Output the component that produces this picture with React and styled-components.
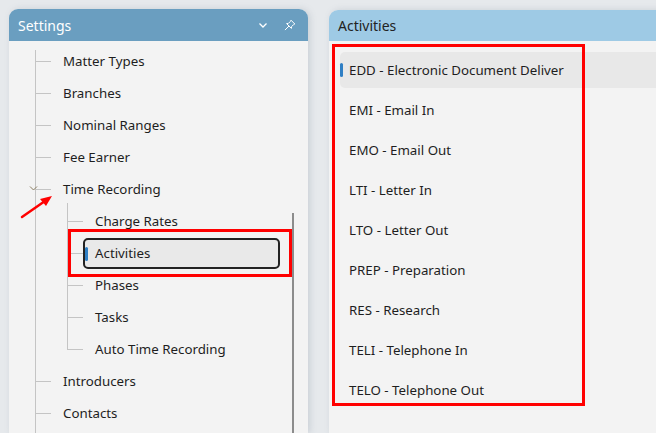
import React from 'react';
import styled, { createGlobalStyle } from 'styled-components';

const GlobalStyle = createGlobalStyle`
  html, body {
    margin: 0;
    padding: 0;
    height: 100%;
    overflow: hidden;
    background: #e6e9ec;
    font-family: "Noto Sans", "Open Sans", sans-serif;
  }
  #root {
    height: 100%;
  }
`;

const Page = styled.div`
  position: relative;
  height: 100%;
  display: flex;
  align-items: stretch;
  padding: 9px 0 0 9px;
  box-sizing: border-box;
  gap: 21px;
`;

const Panel = styled.section`
  position: relative;
  display: flex;
  flex-direction: column;
  width: ${({ width }) => width};
  flex-shrink: 0;
  margin-top: ${({ offset }) => offset || 0}px;
  background: #f3f3f3;
  border-radius: 9px 9px 0 0;
  box-shadow: 2px 0 6px rgba(120, 135, 150, 0.25);
  overflow: hidden;
`;

const Header = styled.header`
  display: flex;
  align-items: center;
  height: ${({ h }) => h}px;
  padding: 0 12px 0 9px;
  background: ${({ bg }) => bg};
  color: ${({ fg }) => fg};
  font-size: 14px;
  flex-shrink: 0;
`;

const HeaderTitle = styled.span`
  flex: 1;
`;

const HeaderIcons = styled.div`
  display: flex;
  align-items: center;
  gap: 16px;
`;

const TreeBody = styled.div`
  position: relative;
  flex: 1;
  padding-top: 4px;
`;

const Tree = styled.ul`
  position: relative;
  list-style: none;
  margin: 0;
  padding: 0;

  &::before {
    content: '';
    position: absolute;
    left: ${({ lineLeft }) => lineLeft}px;
    top: ${({ lineTop }) => lineTop}px;
    bottom: ${({ lineBottom }) => lineBottom}px;
    border-left: 1px solid #c4c4c4;
  }
`;

const Node = styled.li`
  position: relative;
`;

const Row = styled.div`
  position: relative;
  display: flex;
  align-items: center;
  height: 32px;
  padding-left: ${({ indent }) => indent}px;
  font-size: 13.3px;
  color: #1e1e1e;

  &::before {
    content: '';
    position: absolute;
    left: ${({ branchLeft }) => branchLeft}px;
    top: 50%;
    width: 16px;
    border-top: 1px solid #c4c4c4;
  }
`;

const Expander = styled.svg`
  position: absolute;
  left: ${({ left }) => left}px;
  top: 11px;
`;

const SelectedBox = styled.div`
  position: relative;
  display: flex;
  align-items: center;
  box-sizing: border-box;
  margin-left: -12px;
  padding-left: 10px;
  width: 197px;
  height: 31px;
  border: 2px solid #222;
  border-radius: 5px;
  background: #e9e9e9;

  &::before {
    content: '';
    position: absolute;
    left: 0;
    top: 7px;
    width: 3px;
    height: 14px;
    border-radius: 2px;
    background: #2f7fc4;
  }
`;

const ScrollTrack = styled.div`
  position: absolute;
  right: 14px;
  top: 172px;
  bottom: 0;
  width: 2px;
  background: #8c8c8c;
`;

const ActivityList = styled.ul`
  list-style: none;
  margin: 0;
  padding: 9px 0 0 11px;
`;

const ActivityItem = styled.li`
  position: relative;
  display: flex;
  align-items: center;
  height: ${({ selected }) => (selected ? 36 : 40)}px;
  margin: ${({ selected }) => (selected ? '2px 0' : '0')};
  padding-left: 9px;
  font-size: 13.3px;
  color: #1e1e1e;
  border-radius: 5px 0 0 5px;
  background: ${({ selected }) => (selected ? '#e8e8e8' : 'transparent')};

  &::before {
    content: '';
    display: ${({ selected }) => (selected ? 'block' : 'none')};
    position: absolute;
    left: 0;
    top: 11px;
    width: 3px;
    height: 14px;
    border-radius: 2px;
    background: #2f7fc4;
  }
`;

const Callout = styled.div`
  position: absolute;
  left: ${({ x }) => x}px;
  top: ${({ y }) => y}px;
  width: ${({ w }) => w}px;
  height: ${({ h }) => h}px;
  box-sizing: border-box;
  border: 3px solid #ff0000;
  pointer-events: none;
`;

const Arrow = styled.svg`
  position: absolute;
  left: 18px;
  top: 192px;
  pointer-events: none;
`;

const ChevronIcon = () => (
  <svg width="10" height="8" viewBox="0 0 10 8">
    <path d="M1.5 2.5 L5 6 L8.5 2.5" fill="none" stroke="#fff" strokeWidth="1.3" />
  </svg>
);

const PinIcon = () => (
  <svg width="12" height="12" viewBox="0 0 12 12">
    <g fill="none" stroke="#fff" strokeWidth="1" strokeLinejoin="round">
      <path d="M7 1.2 L10.8 5 L9.6 5.6 L7.6 7.6 L7.4 9.4 L2.6 4.6 L4.4 4.4 L6.4 2.4 Z" />
      <path d="M4.8 7.2 L1.2 10.8" strokeLinecap="round" />
    </g>
  </svg>
);

const childItems = ['Charge Rates', 'Activities', 'Phases', 'Tasks', 'Auto Time Recording'];

const activities = [
  'EDD - Electronic Document Deliver',
  'EMI - Email In',
  'EMO - Email Out',
  'LTI - Letter In',
  'LTO - Letter Out',
  'PREP - Preparation',
  'RES - Research',
  'TELI - Telephone In',
  'TELO - Telephone Out',
];

const App = () => (
  <>
    <GlobalStyle />
    <Page>
      <Panel width="299px">
        <Header h={32} bg="#6a9ec0" fg="#ffffff">
          <HeaderTitle>Settings</HeaderTitle>
          <HeaderIcons>
            <ChevronIcon />
            <PinIcon />
          </HeaderIcons>
        </Header>

        <TreeBody>
          <Tree lineLeft={26} lineTop={5} lineBottom={-60}>
            {['Matter Types', 'Branches', 'Nominal Ranges', 'Fee Earner'].map(label => (
              <Node key={label}>
                <Row indent={54} branchLeft={26}>{label}</Row>
              </Node>
            ))}

            <Node>
              <Row indent={54} branchLeft={26}>
                <Expander left={20} width="9" height="8" viewBox="0 0 9 8">
                  <path d="M1 2.5 L4.5 6 L8 2.5" fill="none" stroke="#8a7d62" strokeWidth="1" />
                </Expander>
                Time Recording
              </Row>
              <Tree lineLeft={58} lineTop={-2} lineBottom={16}>
                {childItems.map(label => (
                  <Node key={label}>
                    <Row indent={86} branchLeft={58}>
                      {label === 'Activities'
                        ? <SelectedBox>{label}</SelectedBox>
                        : label}
                    </Row>
                  </Node>
                ))}
              </Tree>
            </Node>

            {['Introducers', 'Contacts'].map(label => (
              <Node key={label}>
                <Row indent={54} branchLeft={26}>{label}</Row>
              </Node>
            ))}
          </Tree>
          <ScrollTrack />
        </TreeBody>
      </Panel>

      <Panel width="420px" offset={1}>
        <Header h={31} bg="#9ecae5" fg="#222">
          <HeaderTitle>Activities</HeaderTitle>
        </Header>
        <ActivityList>
          {activities.map((label, i) => (
            <ActivityItem key={label} selected={i === 0}>{label}</ActivityItem>
          ))}
        </ActivityList>
      </Panel>

      <Callout x={68} y={229} w={224} h={48} />
      <Callout x={332} y={44} w={253} h={362} />
      <Arrow width="40" height="30" viewBox="0 0 40 30">
        <line x1="4" y1="25" x2="27" y2="9" stroke="#ff0000" strokeWidth="2.5" strokeLinecap="round" />
        <path d="M34 4 L22 7 L28 14 Z" fill="#ff0000" />
      </Arrow>
    </Page>
  </>
);

export default App;
